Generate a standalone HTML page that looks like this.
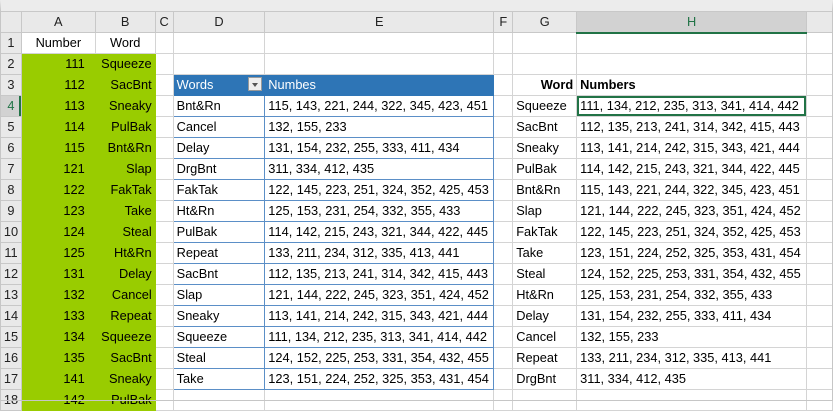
<!DOCTYPE html>
<html><head><style>
body{margin:0;width:833px;height:401px;overflow:hidden;background:#fff;font-family:"Liberation Sans",sans-serif;font-size:12.8px;color:#000;position:relative}
.frame{position:absolute;left:0;top:0;width:833px;height:401px;box-sizing:border-box;border:1px solid #c6c6c6;border-top:11px solid #ececec;pointer-events:none}
table{position:absolute;left:0;top:11px;border-collapse:collapse;table-layout:fixed}
tr{height:21px}
td{height:20px;padding:0 3px;border:1px solid #d4d4d4;white-space:nowrap;overflow:hidden;box-sizing:border-box;line-height:18px}
tr.h td{background:#e9e9e9;text-align:center;color:#222;border-color:#c8c8c8}
td.rh{background:#e9e9e9;text-align:center;padding:0;border-color:#c8c8c8;color:#222}
td.g{background:#99cc00;border-color:#99cc00}
td.c{text-align:right;padding-right:10px}
td.r{text-align:right}
td.t{border-color:#5b8fc7}
td.th{background:#2e75b6;color:#fff;border-color:#2e75b6}
td.b{font-weight:bold}
</style></head><body>
<table>
<colgroup><col style="width:21px"><col style="width:74px"><col style="width:60px"><col style="width:18px"><col style="width:92px"><col style="width:229px"><col style="width:19px"><col style="width:64px"><col style="width:230px"><col style="width:26px"></colgroup>
<tr class="h"><td></td><td>A</td><td>B</td><td>C</td><td>D</td><td>E</td><td>F</td><td>G</td><td style="color:#217346;border-bottom:2px solid #217346;background:#d2d2d2">H</td><td></td></tr>
<tr><td class="rh">1</td><td style="text-align:center">Number</td><td style="text-align:center">Word</td><td></td><td></td><td></td><td></td><td></td><td></td><td></td></tr>
<tr><td class="rh">2</td><td class="g c">111</td><td class="g r">Squeeze</td><td></td><td></td><td></td><td></td><td></td><td></td><td></td></tr>
<tr><td class="rh">3</td><td class="g c">112</td><td class="g r">SacBnt</td><td></td><td class="th" style="position:relative">Words<span style="position:absolute;right:2px;top:2px;width:14px;height:14px;background:#eee;border:1px solid #999;box-sizing:border-box"><span style="position:absolute;left:3px;top:5px;border-left:3.5px solid transparent;border-right:3.5px solid transparent;border-top:4px solid #555"></span></span></td><td class="th">Numbes</td><td></td><td class="r b">Word</td><td class="b">Numbers</td><td></td></tr>
<tr><td class="rh" style="color:#217346;box-shadow:inset -2px 0 #217346;background:#d2d2d2">4</td><td class="g c">113</td><td class="g r">Sneaky</td><td></td><td class="t">Bnt&amp;Rn</td><td class="t">115, 143, 221, 244, 322, 345, 423, 451</td><td></td><td>Squeeze</td><td style="box-shadow:inset 0 0 0 2px #217346">111, 134, 212, 235, 313, 341, 414, 442</td><td></td></tr>
<tr><td class="rh">5</td><td class="g c">114</td><td class="g r">PulBak</td><td></td><td class="t">Cancel</td><td class="t">132, 155, 233</td><td></td><td>SacBnt</td><td>112, 135, 213, 241, 314, 342, 415, 443</td><td></td></tr>
<tr><td class="rh">6</td><td class="g c">115</td><td class="g r">Bnt&amp;Rn</td><td></td><td class="t">Delay</td><td class="t">131, 154, 232, 255, 333, 411, 434</td><td></td><td>Sneaky</td><td>113, 141, 214, 242, 315, 343, 421, 444</td><td></td></tr>
<tr><td class="rh">7</td><td class="g c">121</td><td class="g r">Slap</td><td></td><td class="t">DrgBnt</td><td class="t">311, 334, 412, 435</td><td></td><td>PulBak</td><td>114, 142, 215, 243, 321, 344, 422, 445</td><td></td></tr>
<tr><td class="rh">8</td><td class="g c">122</td><td class="g r">FakTak</td><td></td><td class="t">FakTak</td><td class="t">122, 145, 223, 251, 324, 352, 425, 453</td><td></td><td>Bnt&amp;Rn</td><td>115, 143, 221, 244, 322, 345, 423, 451</td><td></td></tr>
<tr><td class="rh">9</td><td class="g c">123</td><td class="g r">Take</td><td></td><td class="t">Ht&amp;Rn</td><td class="t">125, 153, 231, 254, 332, 355, 433</td><td></td><td>Slap</td><td>121, 144, 222, 245, 323, 351, 424, 452</td><td></td></tr>
<tr><td class="rh">10</td><td class="g c">124</td><td class="g r">Steal</td><td></td><td class="t">PulBak</td><td class="t">114, 142, 215, 243, 321, 344, 422, 445</td><td></td><td>FakTak</td><td>122, 145, 223, 251, 324, 352, 425, 453</td><td></td></tr>
<tr><td class="rh">11</td><td class="g c">125</td><td class="g r">Ht&amp;Rn</td><td></td><td class="t">Repeat</td><td class="t">133, 211, 234, 312, 335, 413, 441</td><td></td><td>Take</td><td>123, 151, 224, 252, 325, 353, 431, 454</td><td></td></tr>
<tr><td class="rh">12</td><td class="g c">131</td><td class="g r">Delay</td><td></td><td class="t">SacBnt</td><td class="t">112, 135, 213, 241, 314, 342, 415, 443</td><td></td><td>Steal</td><td>124, 152, 225, 253, 331, 354, 432, 455</td><td></td></tr>
<tr><td class="rh">13</td><td class="g c">132</td><td class="g r">Cancel</td><td></td><td class="t">Slap</td><td class="t">121, 144, 222, 245, 323, 351, 424, 452</td><td></td><td>Ht&amp;Rn</td><td>125, 153, 231, 254, 332, 355, 433</td><td></td></tr>
<tr><td class="rh">14</td><td class="g c">133</td><td class="g r">Repeat</td><td></td><td class="t">Sneaky</td><td class="t">113, 141, 214, 242, 315, 343, 421, 444</td><td></td><td>Delay</td><td>131, 154, 232, 255, 333, 411, 434</td><td></td></tr>
<tr><td class="rh">15</td><td class="g c">134</td><td class="g r">Squeeze</td><td></td><td class="t">Squeeze</td><td class="t">111, 134, 212, 235, 313, 341, 414, 442</td><td></td><td>Cancel</td><td>132, 155, 233</td><td></td></tr>
<tr><td class="rh">16</td><td class="g c">135</td><td class="g r">SacBnt</td><td></td><td class="t">Steal</td><td class="t">124, 152, 225, 253, 331, 354, 432, 455</td><td></td><td>Repeat</td><td>133, 211, 234, 312, 335, 413, 441</td><td></td></tr>
<tr><td class="rh">17</td><td class="g c">141</td><td class="g r">Sneaky</td><td></td><td class="t">Take</td><td class="t">123, 151, 224, 252, 325, 353, 431, 454</td><td></td><td>DrgBnt</td><td>311, 334, 412, 435</td><td></td></tr>
<tr><td class="rh">18</td><td class="g c">142</td><td class="g r">PulBak</td><td></td><td></td><td></td><td></td><td></td><td></td><td></td></tr>
</table>
<div class="frame"></div>
</body></html>
